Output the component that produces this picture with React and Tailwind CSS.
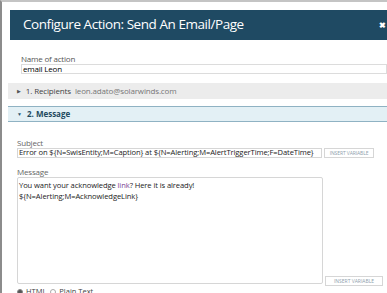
export default function App() {
  const font = { fontFamily: '"Open Sans", "Liberation Sans", sans-serif' };
  return (
    <div
      className="w-[387px] h-[293px] overflow-hidden bg-white border-l-[2px] border-l-[#8c8c8c] border-t-[2px] border-t-[#c4c4c4] pl-[6px] pt-[8px] text-[#333]"
      style={font}
    >
      <div className="ml-[2px] h-[30px] bg-[#1f4a63] flex items-center justify-between pl-[13px] pr-[1px]">
        <span className="text-white text-[13.5px] leading-none tracking-[-0.45px]">Configure Action: Send An Email/Page</span>
        <span className="text-white text-[8px] leading-none font-bold">✖</span>
      </div>

      <div className="pl-[13px] pt-[13px]">
        <div className="text-[8px] leading-[11px] text-[#555] tracking-[-0.2px]">Name of action</div>
        <div className="h-[10px] border border-[#dcdcdc] flex items-center pl-[1px] text-[8px] text-black leading-none tracking-[-0.2px]">
          email Leon
        </div>
      </div>

      <div className="mt-[9px] h-[16px] bg-[#ececec] flex items-center pl-[9px] text-[8px] leading-none tracking-[-0.15px]">
        <span className="text-[5px] text-[#555] mr-[5px]">▶</span>
        <span className="text-[#444]">1. Recipients</span>
        <span className="text-[#777] ml-[4px]">leon.adato@solarwinds.com</span>
      </div>

      <div className="mt-[7px] h-[16px] bg-[#e3f0f5] border-y border-y-[#8fb2c3] flex items-center pl-[9px] text-[8px] leading-none">
        <span className="text-[5px] text-[#2b5a72] mr-[5px]">▼</span>
        <span className="font-bold text-[#234a5f]">2. Message</span>
      </div>

      <div className="pl-[9px] pt-[15px]">
        <div className="text-[8px] leading-[11px] text-[#666] tracking-[-0.2px]">Subject</div>
        <div className="flex items-center gap-[2px]">
          <div className="w-[305px] h-[10px] border border-[#d6d6d6] flex items-center pl-[1px] text-[7.6px] text-[#222] leading-none whitespace-nowrap overflow-hidden tracking-[-0.1px]">
            Error on ${"{"}N=SwisEntity;M=Caption{"}"} at ${"{"}N=Alerting;M=AlertTriggerTime;F=DateTime{"}"}
          </div>
          <div className="w-[50px] h-[10px] border border-[#d6d6d6] flex items-center justify-center text-[5px] text-[#8fa0ad] leading-none tracking-[-0.1px]">
            INSERT VARIABLE
          </div>
        </div>

        <div className="mt-[8px] text-[8px] leading-[11px] text-[#666] tracking-[-0.2px]">Message</div>
        <div className="flex items-end gap-[2px]">
          <div className="w-[306px] h-[107px] border border-[#d6d6d6] rounded-[2px] pl-[1px] pt-[2px] text-[7.6px] leading-[11px] text-[#222] tracking-[-0.1px]">
            <div>
              You want your acknowledge <span className="text-[#7a3e93]">link</span>? Here it is already!
            </div>
            <div>${"{"}N=Alerting;M=AcknowledgeLink{"}"}</div>
          </div>
          <div className="w-[58px] h-[10px] mb-[-2px] border border-[#d6d6d6] flex items-center justify-center text-[5px] text-[#8fa0ad] leading-none">
            INSERT VARIABLE
          </div>
        </div>

        <div className="mt-[4px] flex items-center text-[7.5px] text-[#444] leading-none">
          <span className="w-[6px] h-[6px] rounded-full border border-[#888] bg-[#555] mr-[3px]" />
          <span>HTML</span>
          <span className="w-[6px] h-[6px] rounded-full border border-[#aaa] bg-white ml-[4px] mr-[3px]" />
          <span>Plain Text</span>
        </div>
      </div>
    </div>
  );
}
